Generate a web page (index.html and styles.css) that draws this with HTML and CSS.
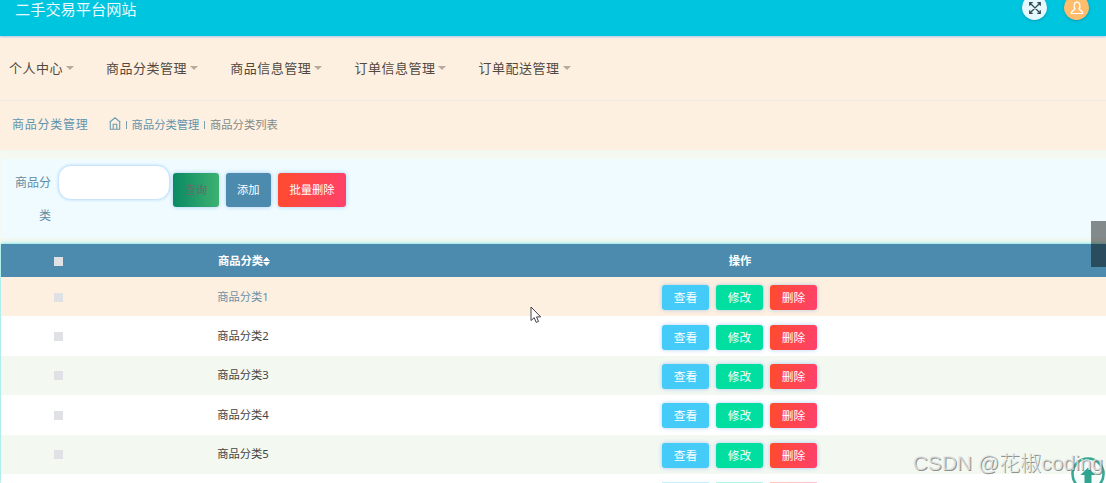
FILE: index.html
```
<!DOCTYPE html>
<html lang="zh-CN">

<head>
    <meta charset="UTF-8">
    <meta name="viewport" content="width=device-width, initial-scale=1.0">
    <title>商品分类列表</title>
    <link rel="stylesheet" href="styles.css">
</head>

<body>
    <div class="header">
        <h1>二手交易平台网站</h1>
        <div class="tools">
            <a class="tool full" href="#">
                <svg width="14" height="14" viewBox="0 0 14 14" fill="none" stroke="#34474d" stroke-width="1.200">
                    <path d="M2 2l10 10M12 2L2 12M1.700 4.700V1.700H4.700M9.300 1.700h3V4.700M12.300 9.300v3H9.300M4.700 12.300H1.700V9.300" />
                </svg>
            </a>
            <a class="tool user" href="#">
                <svg width="14" height="14" viewBox="0 0 14 14" fill="none" stroke="#fff" stroke-width="1.200">
                    <path d="M5 7.800C3.600 6.500 3.600 1.200 7 1.200S10.400 6.500 9 7.800C9 9 12.500 9 12.800 12.500H1.200C1.500 9 5 9 5 7.800z" />
                </svg>
            </a>
        </div>
    </div>

    <ul class="nav">
        <li class="first">个人中心<i></i></li>
        <li>商品分类管理<i></i></li>
        <li>商品信息管理<i></i></li>
        <li>订单信息管理<i></i></li>
        <li>订单配送管理<i></i></li>
    </ul>

    <div class="crumb">
        <h2>商品分类管理</h2>
        <svg width="12" height="13" viewBox="0 0 12 13" fill="none" stroke="#6c9ab0" stroke-width="1.100">
            <path d="M.6 5.200L6 .8l5.400 4.400M1.300 5v7.300h9.400V5M4.200 12V7.200h3.600V12" />
        </svg>
        <span class="line"></span>
        <a href="#">商品分类管理</a>
        <span class="line"></span>
        <span class="now">商品分类列表</span>
    </div>

    <div class="search">
        <label for="name">商品分类</label>
        <input type="text" id="name">
        <button class="btn query">查询</button>
        <button class="btn add">添加</button>
        <button class="btn red batch">批量删除</button>
    </div>

    <table class="list">
        <thead>
            <tr>
                <th class="col-check"><span class="check"></span></th>
                <th class="col-name">商品分类<svg class="sort" width="7" height="9" viewBox="0 0 7 9"><path fill="#fff" d="M3.500 0L7 4H0zM3.500 9L0 5h7z" /></svg></th>
                <th class="col-ops">操作</th>
            </tr>
        </thead>
        <tbody>
            <tr class="hover">
                <td><span class="check"></span></td>
                <td>商品分类1</td>
                <td><div class="ops"><button class="btn view">查看</button><button class="btn edit">修改</button><button class="btn red">删除</button></div></td>
            </tr>
            <tr>
                <td><span class="check"></span></td>
                <td>商品分类2</td>
                <td><div class="ops"><button class="btn view">查看</button><button class="btn edit">修改</button><button class="btn red">删除</button></div></td>
            </tr>
            <tr>
                <td><span class="check"></span></td>
                <td>商品分类3</td>
                <td><div class="ops"><button class="btn view">查看</button><button class="btn edit">修改</button><button class="btn red">删除</button></div></td>
            </tr>
            <tr>
                <td><span class="check"></span></td>
                <td>商品分类4</td>
                <td><div class="ops"><button class="btn view">查看</button><button class="btn edit">修改</button><button class="btn red">删除</button></div></td>
            </tr>
            <tr>
                <td><span class="check"></span></td>
                <td>商品分类5</td>
                <td><div class="ops"><button class="btn view">查看</button><button class="btn edit">修改</button><button class="btn red">删除</button></div></td>
            </tr>
            <tr class="last">
                <td></td>
                <td></td>
                <td><div class="ops"><span class="btn view"></span><span class="btn edit"></span><span class="btn red"></span></div></td>
            </tr>
        </tbody>
    </table>

    <div class="side"></div>
    <a class="top" href="#">
        <svg width="34" height="26" viewBox="0 0 34 26">
            <circle cx="17" cy="17" r="15.500" fill="#f5fcfb" stroke="#35a994" stroke-width="2.600" />
            <path fill="#2fa58f" d="M17 10.500l7.500 7.500H20.500V26h-7v-8H9.500z" />
        </svg>
    </a>
    <div class="mark">CSDN @花椒coding</div>
    <svg class="mouse" width="12" height="18" viewBox="0 0 12 18">
        <path fill="#fff" stroke="#40404a" d="M1 1v13.500l3.200-2.800 2 4.700 2.300-1-2-4.500h4.200z" />
    </svg>
</body>

</html>
```
FILE: styles.css
```
* {
    box-sizing: border-box;
}

body {
    margin: 0;
    height: 483px;
    overflow: hidden;
    position: relative;
    background-color: #f3f8f1;
    font-family: "Noto Sans", "Noto Sans CJK SC", sans-serif;
    font-size: 11.3px;
}

h1,
h2 {
    margin: 0;
    font-weight: normal;
}

a {
    text-decoration: none;
}

/* 顶部 */
.header {
    height: 36px;
    padding: 0 17px 0 15px;
    display: flex;
    justify-content: space-between;
    background-color: #00c5de;
    box-shadow: 0 1px 2px #a9c4ee;
    position: relative;
}

.header h1 {
    font-size: 15.2px;
    line-height: 18px;
    color: #e8fbff;
}

.tools {
    display: flex;
    gap: 17px;
    margin-top: -5px;
}

.tool {
    width: 25px;
    height: 25px;
    border-radius: 50%;
    display: flex;
    align-items: center;
    justify-content: center;
    box-shadow: 0 1px 3px rgba(0, 80, 120, .35);
}

.full {
    background-color: #e4f8fd;
}

.user {
    background-color: #fdbd6c;
}

/* 菜单 */
.nav {
    height: 65px;
    margin: 0;
    padding: 0 0 0 9px;
    display: flex;
    list-style: none;
    background-color: #fef0e0;
    border-bottom: 1px solid #ece8e2;
}

.nav li {
    width: 124.2px;
    font-size: 13px;
    letter-spacing: .5px;
    line-height: 65px;
    color: #51493f;
}

.nav .first {
    width: 97px;
}

.nav i {
    display: inline-block;
    margin-left: 3px;
    vertical-align: 3px;
    border: 4px solid transparent;
    border-top: 4px solid #b5aa9d;
    border-bottom: 0;
}

/* 面包屑 */
.crumb {
    height: 49px;
    padding: 0 0 3px 12px;
    display: flex;
    align-items: center;
    background-color: #fef0e0;
    color: #6293ae;
}

.crumb h2 {
    width: 97px;
    font-size: 12px;
    letter-spacing: .75px;
}

.crumb svg {
    margin-top: -2px;
}

.crumb a {
    color: #6293ae;
}

.crumb .line {
    width: 1px;
    height: 8px;
    margin: 1px 4.8px 0;
    background-color: #7f9daa;
}

.crumb .now {
    color: #858985;
}

/* 查询 */
.search {
    height: 79px;
    margin: 9px 0 6px 1px;
    padding: 6px 0 0 9px;
    display: flex;
    align-items: flex-start;
    background-color: #effbff;
}

.search label {
    width: 41px;
    font-size: 12px;
    line-height: 33px;
    padding-top: 1px;
    text-align: right;
    color: #638ca2;
}

.search input {
    width: 112px;
    height: 35px;
    margin: 0 3px 0 7px;
    border: 1px solid #cbe4fb;
    border-radius: 13px;
    background-color: #fff;
    box-shadow: 0 0 3px #b5dcff;
}

.btn {
    padding: 0;
    border: 0;
    border-radius: 3px;
    font-family: inherit;
    font-size: 11.7px;
    color: #fff;
    box-shadow: 0 0 4px rgba(80, 150, 230, .45);
}

.search .btn {
    width: 45.5px;
    height: 34px;
    margin: 8px 7px 0 0;
    padding-bottom: 2px;
    font-size: 11.3px;
}

.search .query {
    color: #5d7068;
    background: linear-gradient(90deg, #098a63, #3eb171);
}

.search .add {
    background-color: #4c8bae;
}

.search .batch {
    width: 68px;
}

.red {
    background: linear-gradient(100deg, #ff4b2d, #ff416c);
}

/* 列表 */
.list {
    width: 1105px;
    margin-left: 1px;
    table-layout: fixed;
    border-collapse: collapse;
    text-align: center;
    color: #444;
    background-color: #fff;
    box-shadow: 0 0 4px #4fdfe2;
}

.list th,
.list td {
    padding: 0;
}

.list th {
    height: 33px;
    line-height: 33px;
    color: #fff;
    background-color: #4c8bae;
}

.list .col-check {
    width: 114px;
}

.list .col-name {
    width: 256px;
    padding-left: 2px;
}

.list .col-ops {
    padding-left: 3px;
}

.list td {
    height: 39.4px;
    line-height: 37px;
    padding-bottom: 1px;
}

.list tbody tr:nth-child(odd) {
    background-color: #f3f8f1;
}

.list tbody tr.hover {
    background-color: #fef0e0;
    color: #6c92a8;
}

.check {
    display: block;
    width: 9px;
    height: 9px;
    margin: 1px auto 0;
    background-color: #dfe1e5;
}

td .check {
    margin-top: 2px;
}

.sort {
    vertical-align: -1px;
}

.ops {
    display: flex;
    justify-content: center;
    gap: 7px;
    padding: 3px 0 0 2px;
}

.ops .btn {
    width: 47px;
    height: 25px;
    line-height: 25px;
}

.list .last td {
    height: 9px;
    line-height: 8px;
    padding: 0;
}

/* 最后一行只露出按钮上沿 */
.last .ops {
    height: 9px;
    padding-top: 8px;
    overflow: hidden;
}

.last .ops .btn {
    height: 1px;
    opacity: .3;
}

.view {
    background-color: #45cbf7;
}

.edit {
    background-color: #00dfa0;
}

/* 浮层 */
.side {
    position: absolute;
    top: 221px;
    right: 0;
    width: 15px;
    height: 46px;
    background-color: rgba(0, 0, 0, .45);
}

.top {
    position: absolute;
    left: 1071px;
    top: 457px;
    height: 26px;
}

.top svg {
    display: block;
}

.mark {
    position: absolute;
    right: 3px;
    top: 448px;
    font-family: "Liberation Sans", "Noto Sans CJK SC", sans-serif;
    font-weight: 300;
    font-size: 21px;
    line-height: 30px;
    color: rgba(228, 231, 228, .8);
    text-shadow: 1px 1px 0 rgba(100, 100, 100, .7);
    white-space: nowrap;
}

.mouse {
    position: absolute;
    left: 530px;
    top: 306px;
}
```
